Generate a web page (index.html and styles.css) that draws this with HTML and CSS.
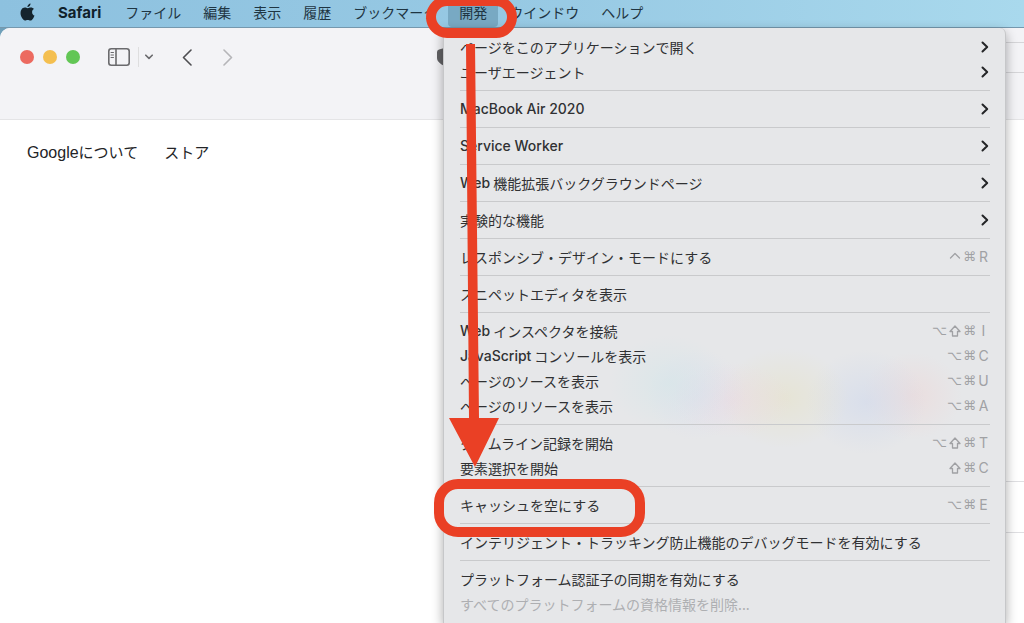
FILE: index.html
```html
<!DOCTYPE html>
<html lang="ja">
<head>
<meta charset="utf-8">
<title>Safari</title>
<link rel="stylesheet" href="styles.css">
</head>
<body>
<nav class="menubar" aria-label="メニューバー">
  <button class="bar-item apple" aria-label="Apple">
    <svg width="15" height="18" viewBox="0 0 15 18"><path d="M10.6 0.4C10.7 2.3 9.2 4 7.4 4.1 7.2 2.3 8.9 0.6 10.6 0.4ZM13.9 6.1C12.8 6.8 12.1 7.8 12.1 9.2c0 1.600 1 2.900 2.400 3.400-.3 1-.8 1.900-1.400 2.800-.8 1.200-1.600 2.100-2.700 2.100-1 0-1.500-.6-2.700-.6-1.200 0-1.700.6-2.700.6-1.100 0-2-1.100-2.800-2.300C.5 12.800-.2 8.900 1.500 6.500 2.300 5.300 3.500 4.600 4.800 4.600c1.200 0 2 .7 3 .7.900 0 1.700-.7 3.100-.7 1.200 0 2.300.5 3 1.500Z"/></svg>
  </button>
  <button class="bar-item app-name">Safari</button>
  <button class="bar-item">ファイル</button>
  <button class="bar-item">編集</button>
  <button class="bar-item">表示</button>
  <button class="bar-item">履歴</button>
  <button class="bar-item">ブックマーク</button>
  <button class="bar-item open" aria-expanded="true">開発</button>
  <button class="bar-item">ウインドウ</button>
  <button class="bar-item">ヘルプ</button>
</nav>

<div class="window">
  <header class="toolbar">
    <div class="lights"><span class="light close"></span><span class="light minimize"></span><span class="light zoom"></span></div>
    <div class="sidebar-group">
      <button class="tool" aria-label="サイドバー"><svg width="22" height="18" viewBox="0 0 22 18"><rect x="0.800" y="0.800" width="20.400" height="16.400" rx="2.500"/><path d="M8 1V17"/><path class="thin" d="M3 4.500H5.500M3 7H5.500M3 9.500H5.500"/></svg></button>
      <button class="tool split" aria-label="タブグループ"><svg width="8" height="6" viewBox="0 0 8 6"><path d="M0.800 1.200 4 4.400 7.200 1.200"/></svg></button>
    </div>
    <button class="tool back" aria-label="戻る"><svg width="10" height="17" viewBox="0 0 10 17"><path d="M9 1 1.500 8.500 9 16"/></svg></button>
    <button class="tool forward" aria-label="進む" disabled><svg width="10" height="17" viewBox="0 0 10 17"><path d="M1 1 8.500 8.500 1 16"/></svg></button>
    <svg class="shield" width="15" height="18" viewBox="0 0 15 18"><path d="M7.500 0 13 1.500Q15 2 15 4V10C15 13.500 11.500 16 7.500 18 3.500 16 0 13.500 0 10V4Q0 2 2 1.500Z"/></svg>
    <input class="address" type="text" aria-label="アドレス">
  </header>
  <main class="page">
    <nav class="links"><a href="#"><span class="roman">Google</span>について</a><a href="#">ストア</a></nav>
    <input class="search" type="text" aria-label="検索">
  </main>
</div>

<div class="menu" role="menu">
  <button class="item" role="menuitem">ページをこのアプリケーションで開く<svg class="arrow" width="8" height="12" viewBox="0 0 8 12"><path d="M1.500 1.500 6.200 6 1.500 10.500"/></svg></button>
  <button class="item" role="menuitem">ユーザエージェント<svg class="arrow" width="8" height="12" viewBox="0 0 8 12"><path d="M1.500 1.500 6.200 6 1.500 10.500"/></svg></button>
  <hr>
  <button class="item" role="menuitem"><span class="latin">MacBook Air 2020</span><svg class="arrow" width="8" height="12" viewBox="0 0 8 12"><path d="M1.500 1.500 6.200 6 1.500 10.500"/></svg></button>
  <hr>
  <button class="item" role="menuitem"><span class="latin">Service Worker</span><svg class="arrow" width="8" height="12" viewBox="0 0 8 12"><path d="M1.500 1.500 6.200 6 1.500 10.500"/></svg></button>
  <hr>
  <button class="item" role="menuitem"><span class="latin">Web</span>機能拡張バックグラウンドページ<svg class="arrow" width="8" height="12" viewBox="0 0 8 12"><path d="M1.500 1.500 6.200 6 1.500 10.500"/></svg></button>
  <hr>
  <button class="item" role="menuitem">実験的な機能<svg class="arrow" width="8" height="12" viewBox="0 0 8 12"><path d="M1.500 1.500 6.200 6 1.500 10.500"/></svg></button>
  <hr>
  <button class="item" role="menuitem">レスポンシブ・デザイン・モードにする<span class="keys"><kbd aria-label="Control"><svg width="12" height="12" viewBox="0 0 12 12"><path d="M1.500 7 6 2.500 10.500 7"/></svg></kbd><kbd>⌘</kbd><kbd>R</kbd></span></button>
  <hr>
  <button class="item" role="menuitem">スニペットエディタを表示</button>
  <hr>
  <button class="item" role="menuitem"><span class="latin">Web</span>インスペクタを接続<span class="keys"><kbd>⌥</kbd><kbd aria-label="Shift"><svg width="12" height="12" viewBox="0 0 12 12"><path d="M6 1 11 6.500H8.500V11H3.500V6.500H1Z"/></svg></kbd><kbd>⌘</kbd><kbd>I</kbd></span></button>
  <button class="item" role="menuitem"><span class="latin">JavaScript</span>コンソールを表示<span class="keys"><kbd>⌥</kbd><kbd>⌘</kbd><kbd>C</kbd></span></button>
  <button class="item" role="menuitem">ページのソースを表示<span class="keys"><kbd>⌥</kbd><kbd>⌘</kbd><kbd>U</kbd></span></button>
  <button class="item" role="menuitem">ページのリソースを表示<span class="keys"><kbd>⌥</kbd><kbd>⌘</kbd><kbd>A</kbd></span></button>
  <hr>
  <button class="item" role="menuitem">タイムライン記録を開始<span class="keys"><kbd>⌥</kbd><kbd aria-label="Shift"><svg width="12" height="12" viewBox="0 0 12 12"><path d="M6 1 11 6.500H8.500V11H3.500V6.500H1Z"/></svg></kbd><kbd>⌘</kbd><kbd>T</kbd></span></button>
  <button class="item" role="menuitem">要素選択を開始<span class="keys"><kbd aria-label="Shift"><svg width="12" height="12" viewBox="0 0 12 12"><path d="M6 1 11 6.500H8.500V11H3.500V6.500H1Z"/></svg></kbd><kbd>⌘</kbd><kbd>C</kbd></span></button>
  <hr>
  <button class="item" role="menuitem">キャッシュを空にする<span class="keys"><kbd>⌥</kbd><kbd>⌘</kbd><kbd>E</kbd></span></button>
  <hr>
  <button class="item" role="menuitem">インテリジェント・トラッキング防止機能のデバッグモードを有効にする</button>
  <hr>
  <button class="item" role="menuitem">プラットフォーム認証子の同期を有効にする</button>
  <button class="item" role="menuitem" disabled>すべてのプラットフォームの資格情報を削除...</button>
</div>

<svg class="marks" width="230" height="540" viewBox="426 0 230 540" aria-hidden="true">
  <rect x="431" y="1" width="81" height="32" rx="16"/>
  <rect x="439" y="484" width="201" height="48" rx="19"/>
  <path d="M466 44H475L479 418H499L475 467 449 418H469Z"/>
</svg>
</body>
</html>
```
FILE: styles.css
```css
* { box-sizing: border-box; }

body {
  margin: 0;
  height: 100vh;
  overflow: hidden;
  position: relative;
  display: flex;
  flex-direction: column;
  background: #6f9fb9;
  color: #303133;
  font: 14px/20px "Noto Sans CJK JP", sans-serif;
}

button {
  border: 0;
  padding: 0;
  background: none;
  color: inherit;
  font: inherit;
}

.menubar {
  flex: none;
  display: flex;
  height: 28px;
  padding-left: 9px;
  background: linear-gradient(90deg, #8dc1df, #98cae4 55%, #a9d9ed);
  border-bottom: 1px solid #7598ae;
}

.bar-item {
  padding: 0 11px 3px;
  white-space: nowrap;
  color: #1f3542;
}

.apple { display: flex; align-items: center; color: #15242d; }
.apple svg { fill: currentColor; }
.app-name { padding: 0 13px 2px 12px; font: 700 15px/20px Inter, sans-serif; color: #10212b; }
.open { background: #78a9c3; border-radius: 4px; }

.window {
  flex: 1;
  display: flex;
  flex-direction: column;
  overflow: hidden;
  border-radius: 10px 0 0 0;
  background: #fff;
}

.toolbar {
  flex: none;
  display: flex;
  align-items: flex-start;
  height: 92px;
  padding: 14px 0 0 20px;
  background: #f3f3f6;
  border-bottom: 1px solid #e4e4e6;
}

.toolbar > * { flex: none; }
.lights { display: flex; gap: 9px; height: 30px; align-items: center; }
.light { width: 14px; height: 14px; border-radius: 50%; }
.close { background: #ec6a60; }
.minimize { background: #f4bf50; }
.zoom { background: #62c655; }

.sidebar-group { display: flex; align-items: center; height: 30px; margin-left: 28px; }
.tool { display: flex; align-items: center; height: 30px; }
.tool svg { fill: none; stroke: #6a6a6d; stroke-width: 1.6; stroke-linecap: round; stroke-linejoin: round; }
.tool .thin { stroke-width: 1; }
.split { height: 20px; margin-left: 8px; padding-left: 6px; border-left: 1px solid #dededf; }
.back { margin-left: 29px; }
.back svg { stroke: #4e4e51; }
.forward { margin-left: 31px; }
.forward svg { stroke: #b5b5b8; }
.shield { fill: #626265; margin: 6px 0 0 204px; }

.toolbar .address {
  flex: 1;
  min-width: 0;
  height: 31px;
  margin-left: 12px;
  border: 1px solid #d5d5d8;
  border-width: 1px 0;
  background: #f3f3f6;
}

.page { flex: 1; display: flex; flex-direction: column; padding: 22px 0 0 27px; }
.links { display: flex; gap: 26px; font-size: 15px; }
.links a { color: #232427; text-decoration: none; }
.roman { font: 16px/20px "Liberation Sans", sans-serif; }

.search {
  align-self: stretch;
  height: 52px;
  margin: 318px 0 0 480px;
  border: 1px solid #dfdfe2;
  border-width: 1px 0;
  background: #fff;
}

.menu {
  position: absolute;
  top: 28px;
  left: 443px;
  right: 18px;
  bottom: 0;
  padding: 6px 15px 6px 16px;
  overflow: hidden;
  border: 1px solid #c6c7c9;
  border-width: 0 1px;
  border-radius: 0 6px 0 0;
  background:
    radial-gradient(ellipse 60px 48px at 225px 355px, #d4e6e999, #d4e6e900),
    radial-gradient(ellipse 50px 46px at 252px 366px, #d7dbf066, #d7dbf000),
    radial-gradient(ellipse 60px 38px at 288px 372px, #eed7df77, #eed7df00),
    radial-gradient(ellipse 65px 50px at 340px 370px, #e6e2c899, #e6e2c800),
    radial-gradient(ellipse 60px 52px at 422px 374px, #d0d9ec99, #d0d9ec00),
    radial-gradient(ellipse 50px 44px at 468px 368px, #eed5d588, #eed5d500),
    #e6e7e9;
  box-shadow: 0 4px 12px #0005;
}

.item {
  display: flex;
  align-items: center;
  width: 100%;
  height: 25px;
  text-align: left;
  white-space: nowrap;
}

.item:disabled { color: #aeafb2; }
.latin { margin-right: 3px; font: 500 14px/20px Inter, sans-serif; }
.arrow { margin: 0 1px 0 auto; fill: none; stroke: #242527; stroke-width: 2; stroke-linecap: round; stroke-linejoin: round; }

.menu hr {
  height: 1px;
  margin: 6px 0 5px;
  border: 0;
  background: #c9cacc;
}

.keys { display: flex; margin-left: auto; color: #a0a1a4; }
.keys kbd { display: flex; align-items: center; justify-content: center; width: 15px; height: 20px; font: 13px/20px "DejaVu Sans", sans-serif; }
.keys kbd:last-child { width: 13px; font: 14px/20px Inter, sans-serif; }
.keys svg { fill: none; stroke: currentColor; stroke-width: 1.3; stroke-linejoin: round; stroke-linecap: round; }

.marks { position: absolute; top: 0; left: 426px; }
.marks rect { fill: none; stroke: #ea4025; stroke-width: 10; }
.marks path { fill: #ea4025; }
```
